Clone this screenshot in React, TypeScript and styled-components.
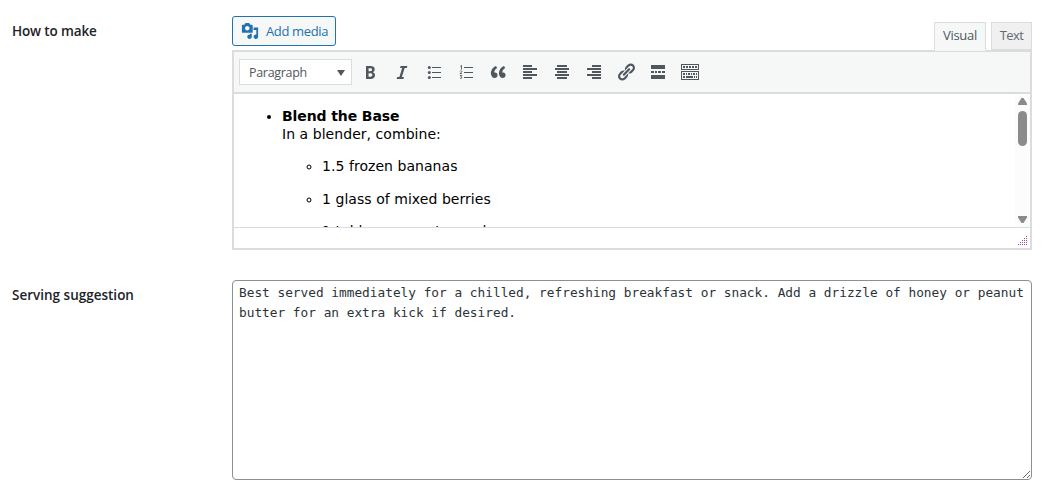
import React from "react";
import styled, { createGlobalStyle } from "styled-components";

const Global = createGlobalStyle`
  * { box-sizing: border-box; }
  body { margin: 0; background: #fff; color: #3c434a; font: 13px/20px "Open Sans", "Noto Sans", sans-serif; }
`;

const Form = styled.main`
  width: 1053px;
  height: 498px;
  padding: 16px 21px 0 12px;
  display: flex;
  flex-direction: column;
  gap: 30px;
  overflow: hidden;
`;

const FieldRow = styled.section`
  display: grid;
  grid-template-columns: 220px 800px;
`;

const Label = styled.label<{ $spacing: string }>`
  padding-top: 5px;
  color: #1d2327;
  font-size: 13.5px;
  font-weight: 600;
  letter-spacing: ${(p) => p.$spacing};
`;

const EditorTools = styled.div`
  height: 35px;
  display: flex;
  justify-content: space-between;
  position: relative;
  z-index: 1;
`;

const MediaButton = styled.button`
  width: 104px;
  height: 30px;
  padding: 0 0 0 8px;
  display: flex;
  align-items: center;
  gap: 7px;
  border: 1px solid #2271b1;
  border-radius: 3px;
  background: #f6f7f7;
  color: #2271b1;
  font: inherit;
  letter-spacing: -0.35px;
  white-space: nowrap;
`;

const Tabs = styled.div`
  display: flex;
  gap: 5px;
  padding-top: 6px;
`;

const Tab = styled.button<{ $active?: boolean; $width: number }>`
  width: ${(p) => p.$width}px;
  height: ${(p) => (p.$active ? 29 : 28)}px;
  padding: ${(p) => (p.$active ? "0 0 3px" : "0 0 2px")};
  border: 1px solid #dcdcde;
  border-bottom-color: ${(p) => (p.$active ? "#f6f7f7" : "#dcdcde")};
  background: ${(p) => (p.$active ? "#f6f7f7" : "#f0f0f1")};
  color: ${(p) => (p.$active ? "#50575e" : "#646970")};
  font: inherit;
  letter-spacing: ${(p) => (p.$active ? "-0.3px" : "-0.55px")};
`;

const Editor = styled.div`
  height: 200px;
  margin-top: -1px;
  border: 2px solid #dcdcde;
  border-top-width: 1px;
  display: flex;
  flex-direction: column;
`;

const Toolbar = styled.div`
  height: 43px;
  flex: none;
  padding: 7px 0 0 5px;
  display: flex;
  align-items: flex-start;
  border-top: 1px solid #dcdcde;
  border-bottom: 2px solid #dcdcde;
  background: #f6f7f7;
`;

const FormatSelect = styled.div`
  width: 113px;
  height: 26px;
  margin-right: 2px;
  padding: 1px 6px 0 9px;
  display: flex;
  align-items: center;
  justify-content: space-between;
  border: 1px solid #dcdcde;
  background: #fff;
  color: #50575e;
  font-size: 12.5px;
  letter-spacing: -0.3px;
`;

const ToolButton = styled.span`
  width: 32px;
  height: 26px;
  display: flex;
  align-items: center;
  justify-content: center;
  color: #50575e;
`;

const Viewport = styled.div`
  height: 133px;
  display: flex;
  justify-content: space-between;
  overflow: hidden;
`;

const Content = styled.div`
  color: #000;
  font: 14px/18px "DejaVu Sans", Verdana, sans-serif;
  padding: 13px 0 0 8px;
  letter-spacing: 0.05px;
  white-space: nowrap;
`;

const List = styled.ul<{ $nested?: boolean }>`
  margin: ${(p) => (p.$nested ? "14px 0 0" : "0")};
  padding-left: 40px;
  list-style: ${(p) => (p.$nested ? "circle" : "disc")};
`;

const Item = styled.li`
  & + & { margin-top: 14.5px; }
`;

const Title = styled.strong`
  letter-spacing: -0.1px;
`;

const Scrollbar = styled.div`
  width: 15px;
  padding: 4px 0;
  display: flex;
  flex-direction: column;
  align-items: center;
  background: #fcfcfc;
`;

const Thumb = styled.div`
  width: 9px;
  height: 35px;
  margin: 6px 0 auto;
  border-radius: 5px;
  background: #8b8b8b;
`;

const StatusBar = styled.div`
  flex: 1;
  padding: 0 3px 3px;
  display: flex;
  justify-content: flex-end;
  align-items: flex-end;
  border-top: 1px solid #dcdcde;
`;

const TextArea = styled.textarea`
  display: block;
  width: 800px;
  height: 200px;
  padding: 2px 6px;
  border: 1px solid #8c8f94;
  border-radius: 4px;
  outline: 0;
  resize: vertical;
  overflow: hidden;
  background: #fff;
  color: #2c3338;
  font: 12.79px/20px "DejaVu Sans Mono", Consolas, monospace;
`;

const Svg = ({ size = 20, children }: { size?: number; children: React.ReactNode }) => (
  <svg width={size} height={size} viewBox="0 0 20 20" fill="currentColor">{children}</svg>
);

const MediaIcon = () => (
  <Svg size={18}>
    <path fillRule="evenodd" d="M13 11V4c0-.55-.45-1-1-1h-1.670L9 1H5L3.670 3H2c-.55 0-1 .45-1 1v7c0 .55.45 1 1 1h10c.55 0 1-.45 1-1zM7 4.500c1.380 0 2.500 1.120 2.500 2.500S8.380 9.500 7 9.500 4.500 8.380 4.500 7 5.620 4.500 7 4.500zM14 6h5v10.500c0 1.380-1.120 2.500-2.500 2.500S14 17.880 14 16.500s1.120-2.500 2.500-2.500c.17 0 .34.020.5.050V9h-3V6zM10 14.050V13h2v3.500c0 1.380-1.120 2.500-2.500 2.500S7 17.880 7 16.500 8.120 14 9.500 14c.17 0 .34.020.5.050z" />
  </Svg>
);

const Bars = ({ spans }: { spans: number[][] }) => (
  <Svg>
    {spans.map(([x, w], i) => <rect key={i} x={x} y={3 + i * 3} width={w} height="2" />)}
  </Svg>
);

const icons: [string, React.ReactNode][] = [
  ["Bold", <Svg><path fillRule="evenodd" d="M6 4v13h4.540c1.370 0 2.460-.33 3.260-1 .8-.66 1.200-1.580 1.200-2.770 0-.84-.17-1.510-.51-2.010s-.9-.85-1.670-1.030v-.09c.57-.1 1.020-.4 1.360-.9s.51-1.130.51-1.910c0-1.140-.39-1.980-1.170-2.500C12.750 4.260 11.500 4 9.780 4H6zm2.570 5.150V6.260h1.360c.73 0 1.270.11 1.610.32.340.22.510.58.510 1.070 0 .54-.16.920-.47 1.150s-.82.350-1.510.35h-1.500zm0 2.190h1.600c1.440 0 2.160.53 2.160 1.610 0 .6-.17 1.050-.51 1.340s-.86.43-1.570.43H8.570v-3.380z" /></Svg>],
  ["Italic", <Svg><path d="M14.780 6h-2.130l-2.800 9h2.120l-.62 2H4.600l.62-2h2.140l2.800-9H8.030l.62-2h6.750z" /></Svg>],
  ["Bulleted list", <Svg><circle cx="5.300" cy="5.500" r="1.500" /><circle cx="5.300" cy="10.500" r="1.500" /><circle cx="5.300" cy="15.500" r="1.500" /><path d="M8 5h9v1H8zm0 5h9v1H8zm0 5h9v1H8z" /></Svg>],
  ["Numbered list", <Svg><path d="M8 5h9v1H8zm0 5h9v1H8zm0 5h9v1H8z" /><path fill="none" stroke="currentColor" strokeWidth=".9" d="M4.300 4.300l1.200-.8v4M4 9.300c.5-.9 2-.5 1.800.3-.1.700-1.500 1.400-1.800 2h2M4 13.500h1.800l-1 1.300c1.700 0 1.300 2.200-.8 1.500" /></Svg>],
  ["Blockquote", <Svg><path d="M9.490 13.220c0-.74-.2-1.380-.61-1.900-.62-.78-1.830-.88-2.530-.72-.29-1.650 1.110-3.750 2.920-4.650L7.880 4c-2.730 1.300-5.420 4.280-4.960 8.050C3.210 14.430 4.590 16 6.540 16c.85 0 1.560-.25 2.120-.75s.83-1.180.83-2.030zm8.050 0c0-.74-.2-1.380-.61-1.900-.63-.78-1.830-.88-2.530-.72-.29-1.650 1.110-3.750 2.920-4.650L15.930 4c-2.730 1.300-5.410 4.280-4.950 8.050.29 2.380 1.660 3.950 3.610 3.950.85 0 1.560-.25 2.120-.75s.83-1.180.83-2.030z" /></Svg>],
  ["Align left", <Bars spans={[[3, 9], [3, 14], [3, 9], [3, 14], [3, 9]]} />],
  ["Align center", <Bars spans={[[5, 10], [3, 14], [5, 10], [3, 14], [5, 10]]} />],
  ["Align right", <Bars spans={[[8, 9], [3, 14], [8, 9], [3, 14], [8, 9]]} />],
  ["Link", <Svg><path d="M17.740 2.760c1.680 1.690 1.680 4.410 0 6.100l-1.530 1.520c-1.120 1.120-2.700 1.470-4.140 1.090l2.620-2.610.76-.77.760-.76c.84-.84.84-2.200 0-3.040-.84-.85-2.200-.85-3.040 0l-.77.760-3.380 3.380c-.37-1.440-.02-3.020 1.100-4.140l1.520-1.530c1.690-1.680 4.420-1.680 6.100 0zM8.590 13.430l5.340-5.340c.42-.42.42-1.100 0-1.520-.44-.43-1.130-.39-1.530 0l-5.330 5.340c-.42.42-.42 1.100 0 1.520.44.430 1.130.39 1.520 0zm-.76 2.290l4.140-4.150c.38 1.440.03 3.020-1.090 4.140l-1.520 1.530c-1.690 1.680-4.410 1.680-6.100 0-1.680-1.680-1.680-4.420 0-6.100l1.530-1.520c1.120-1.120 2.700-1.470 4.140-1.100l-4.140 4.150c-.85.84-.85 2.200 0 3.050.84.840 2.200.84 3.040 0z" /></Svg>],
  ["Read more", <Svg><path d="M3 3h14v4H3zM3 9h3v2H3zm4 0h2v2H7zm3 0h3v2h-3zm4 0h3v2h-3zM3 13h14v4H3z" /></Svg>],
  ["Toolbar toggle", <Svg><path fillRule="evenodd" d="M1 2h18v6H1zm1 1v4h16V3zM3 4h2v2H3zm3 0h2v2H6zm3 0h2v2H9zm3 0h2v2h-2zm3 0h2v2h-2zM1 9h18v9H1zm1 1v7h16v-7zM3 11h2v2H3zm3 0h1v2H6zm2 0h2v2H8zm3 0h1v2h-1zm2 0h2v2h-2zm3 0h1v2h-1zM3 14h2v2H3zm3 0h7v2H6zm8 0h1v2h-1zm2 0h1v2h-1z" /></Svg>],
];

const Arrow = ({ down }: { down?: boolean }) => (
  <svg width="9" height="7" viewBox="0 0 9 7" fill="#8b8b8b">
    <path d={down ? "M0 0h9v1.500L5.500 7h-2L0 1.500z" : "M0 7h9V5.500L5.500 0h-2L0 5.500z"} />
  </svg>
);

const gripDots = [0, 1, 2, 3, 4].flatMap((r) =>
  Array.from({ length: r + 1 }, (_, c) => [8 - c * 2, r * 2])
);

export default function App() {
  return (
    <>
      <Global />
      <Form>
        <FieldRow>
          <Label $spacing="-0.14px">How to make</Label>
          <div>
            <EditorTools>
              <MediaButton><MediaIcon />Add media</MediaButton>
              <Tabs>
                <Tab $active $width={52}>Visual</Tab>
                <Tab $width={41}>Text</Tab>
              </Tabs>
            </EditorTools>
            <Editor>
              <Toolbar>
                <FormatSelect>
                  Paragraph
                  <svg width="8" height="6" viewBox="0 0 8 6" fill="#50575e"><path d="M0 0h8L4 6z" /></svg>
                </FormatSelect>
                {icons.map(([name, icon]) => <ToolButton key={name} aria-label={name}>{icon}</ToolButton>)}
              </Toolbar>
              <Viewport>
                <Content>
                  <List>
                    <Item>
                      <Title>Blend the Base</Title><br />
                      In a blender, combine:
                      <List $nested>
                        <Item>1.5 frozen bananas</Item>
                        <Item>1 glass of mixed berries</Item>
                        <Item>1 tablespoon oats seed</Item>
                      </List>
                    </Item>
                  </List>
                </Content>
                <Scrollbar><Arrow /><Thumb /><Arrow down /></Scrollbar>
              </Viewport>
              <StatusBar>
                <svg width="9" height="9" viewBox="0 0 9 9" fill="#9b4f96" shapeRendering="crispEdges">
                  {gripDots.map(([x, y]) => <rect key={`${x}-${y}`} x={x} y={y} width="1" height="1" />)}
                </svg>
              </StatusBar>
            </Editor>
          </div>
        </FieldRow>
        <FieldRow>
          <Label $spacing="0px">Serving suggestion</Label>
          <TextArea spellCheck={false} defaultValue="Best served immediately for a chilled, refreshing breakfast or snack. Add a drizzle of honey or peanut butter for an extra kick if desired." />
        </FieldRow>
      </Form>
    </>
  );
}
